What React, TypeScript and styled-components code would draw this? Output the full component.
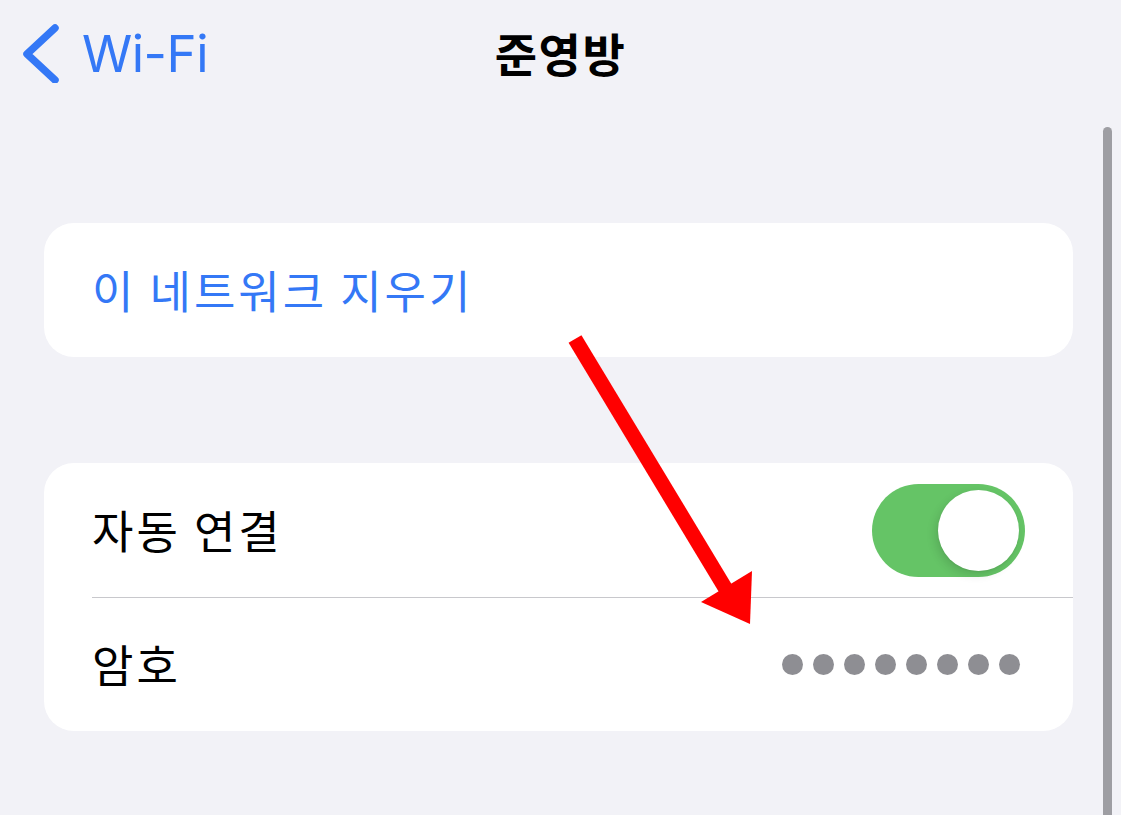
import React from "react";
import styled, { createGlobalStyle } from "styled-components";

const Global = createGlobalStyle`
  html, body { margin: 0; padding: 0; }
  body {
    background: #f2f2f7;
    font-family: "Noto Sans CJK KR", "Noto Sans", sans-serif;
    width: 1121px;
    height: 815px;
    overflow: hidden;
  }
`;

const Page = styled.div`
  position: relative;
  width: 1121px;
  height: 815px;
  background: #f2f2f7;
`;

const NavBar = styled.header`
  display: grid;
  grid-template-columns: 1fr auto 1fr;
  align-items: center;
  height: 106px;
  padding: 0 0 4px 0;
`;

const BackButton = styled.div`
  display: flex;
  align-items: center;
  gap: 23px;
  padding-left: 23px;
  color: #3478f6;
  font-family: Inter, "Noto Sans", sans-serif;
  font-size: 51px;
  font-weight: 400;
  letter-spacing: -0.5px;
`;

const Title = styled.h1`
  margin: 0;
  font-size: 46px;
  font-weight: 700;
  color: #000;
  letter-spacing: 1.5px;
  margin-top: -2px;
`;

const Content = styled.main`
  display: flex;
  flex-direction: column;
  gap: 106px;
  padding: 113px 48px 0 44px;
`;

const Card = styled.section`
  background: #fff;
  border-radius: 30px;
  overflow: hidden;
`;

const Row = styled.div`
  padding-left: 48px;
  height: 134px;
`;

const RowInner = styled.div<{ $divider?: boolean }>`
  display: flex;
  align-items: center;
  justify-content: space-between;
  height: 100%;
  box-sizing: border-box;
  padding-right: 48px;
  border-top: ${(p) => (p.$divider ? "1px solid #c8c8cc" : "none")};
`;

const Label = styled.span<{ $accent?: boolean }>`
  font-size: 45px;
  letter-spacing: 3px;
  color: ${(p) => (p.$accent ? "#3478f6" : "#000")};
  font-weight: 400;
  margin-top: -2px;
`;

const Toggle = styled.div`
  width: 153px;
  height: 93px;
  border-radius: 47px;
  background: #65c466;
  display: flex;
  align-items: center;
  justify-content: flex-end;
  padding: 0 6px;
  box-sizing: border-box;
`;

const Knob = styled.div`
  width: 81px;
  height: 81px;
  border-radius: 50%;
  background: #fff;
  box-shadow: -3px 4px 10px rgba(0, 0, 0, 0.12), 0 1px 2px rgba(0, 0, 0, 0.06);
`;

const Dots = styled.div`
  display: flex;
  gap: 10px;
  margin-right: 5px;
`;

const Dot = styled.span`
  width: 21px;
  height: 21px;
  border-radius: 50%;
  background: #8e8e93;
`;

const ScrollIndicator = styled.div`
  position: absolute;
  top: 127px;
  right: 9px;
  bottom: 0;
  width: 9px;
  border-radius: 4.5px 4.5px 0 0;
  background: #9e9ea3;
`;

const ArrowOverlay = styled.svg`
  position: absolute;
  left: 0;
  top: 0;
  pointer-events: none;
`;

export default function App() {
  return (
    <Page>
      <Global />
      <NavBar>
        <BackButton>
          <svg width="36" height="60" viewBox="0 0 36 60">
            <polyline
              points="32,5 4,31 32,57"
              fill="none"
              stroke="#3478f6"
              strokeWidth="7.5"
              strokeLinecap="round"
              strokeLinejoin="round"
            />
          </svg>
          <span>Wi-Fi</span>
        </BackButton>
        <Title>준영방</Title>
        <div />
      </NavBar>
      <Content>
        <Card>
          <Row>
            <RowInner>
              <Label $accent>이 네트워크 지우기</Label>
            </RowInner>
          </Row>
        </Card>
        <Card>
          <Row>
            <RowInner>
              <Label>자동 연결</Label>
              <Toggle>
                <Knob />
              </Toggle>
            </RowInner>
          </Row>
          <Row>
            <RowInner $divider>
              <Label>암호</Label>
              <Dots>
                {Array.from({ length: 8 }).map((_, i) => (
                  <Dot key={i} />
                ))}
              </Dots>
            </RowInner>
          </Row>
        </Card>
      </Content>
      <ScrollIndicator />
      <ArrowOverlay width="1121" height="815" viewBox="0 0 1121 815">
        <line x1="575" y1="339" x2="730" y2="596" stroke="#ff0000" strokeWidth="15" />
        <polygon points="701,602 752,571 750,624" fill="#ff0000" />
      </ArrowOverlay>
    </Page>
  );
}
